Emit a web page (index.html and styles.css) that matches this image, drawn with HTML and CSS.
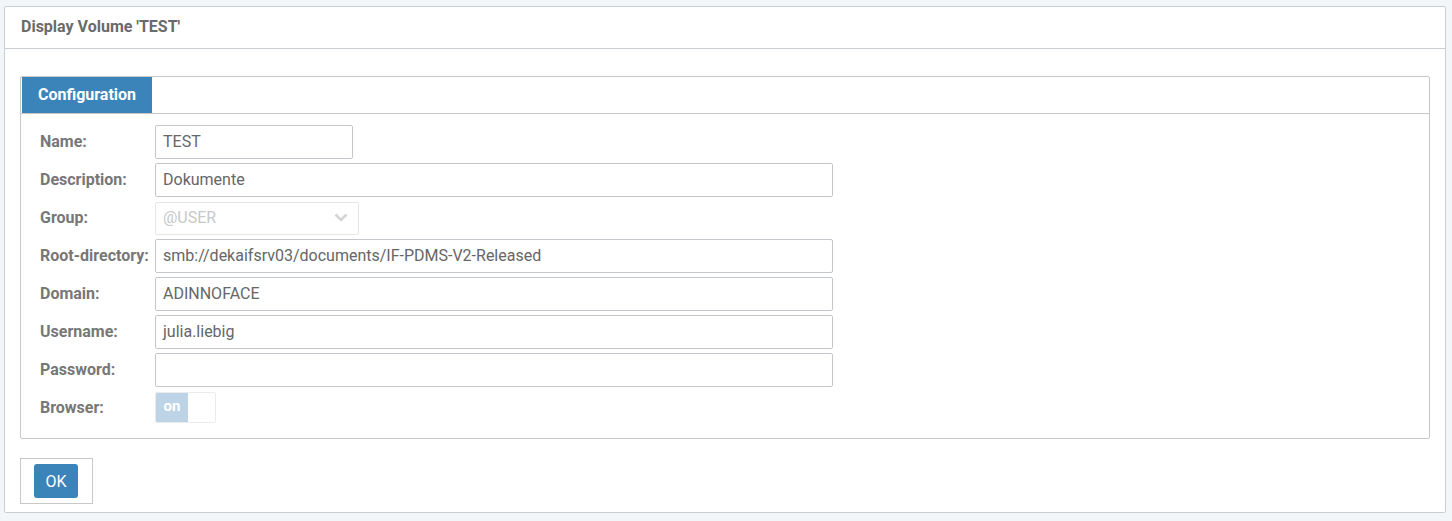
FILE: index.html
```html
<!DOCTYPE html>
<html>
<head>
<meta charset="utf-8">
<link rel="stylesheet" href="styles.css">
</head>
<body>
<div class="panel">
  <div class="panel-header">Display Volume 'TEST'</div>
  <div class="panel-body">
    <div class="tabbox">
      <div class="tabbar"><div class="tab">Configuration</div></div>
      <div class="form">
        <div class="row"><label>Name:</label><div class="input w-name">TEST</div></div>
        <div class="row"><label>Description:</label><div class="input w-wide">Dokumente</div></div>
        <div class="row"><label>Group:</label><div class="select">@USER<svg class="chev" width="14" height="9" viewBox="0 0 14 9"><path d="M1.5 1.5 L7 7 L12.5 1.5" fill="none" stroke="#d4d4d4" stroke-width="2.6"/></svg></div></div>
        <div class="row"><label>Root-directory:</label><div class="input w-wide">smb://dekaifsrv03/documents/IF-PDMS-V2-Released</div></div>
        <div class="row"><label>Domain:</label><div class="input w-wide">ADINNOFACE</div></div>
        <div class="row"><label>Username:</label><div class="input w-wide">julia.liebig</div></div>
        <div class="row"><label>Password:</label><div class="input w-wide"></div></div>
        <div class="row row-toggle"><label>Browser:</label><div class="toggle"><span class="on">on</span><span class="off"></span></div></div>
      </div>
    </div>
    <div class="actions"><button class="btn">OK</button></div>
  </div>
</div>
</body>
</html>
```
FILE: styles.css
```css
* { box-sizing: border-box; }
html, body { margin: 0; padding: 0; }
body {
  background: #f2f6f9;
  font-family: Roboto, "Liberation Sans", Arial, sans-serif;
  font-size: 16px;
  color: #666;
  padding: 6px 6px 0 4px;
}
.panel {
  background: #fff;
  border: 1px solid #c9ced3;
  border-radius: 2px;
  height: 507px;
}
.panel-header {
  height: 42px;
  border-bottom: 1px solid #c9ced3;
  padding-left: 16px;
  padding-bottom: 2px;
  display: flex;
  align-items: center;
  font-weight: bold;
  color: #6a6a6a;
  font-size: 16px;
}
.panel-body {
  padding: 27px 15px 8px 15px;
}
.tabbox {
  border: 1px solid #c8c8c8;
  border-radius: 2px;
}
.tabbar {
  border-bottom: 1px solid #c8c8c8;
  padding-left: 1px;
  height: 37px;
}
.tab {
  width: 130px;
  height: 36px;
  background: #3a84b9;
  color: #fff;
  font-weight: bold;
  display: flex;
  align-items: center;
  justify-content: center;
  padding-bottom: 1px;
  font-size: 16px;
}
.form {
  padding: 11px 0 13px 19px;
}
.row {
  display: flex;
  align-items: center;
  height: 34px;
  margin-bottom: 4px;
}
.row-toggle { height: 34px; margin-bottom: 0; }
.row label {
  width: 115px;
  font-weight: bold;
  color: #777;
  font-size: 16px;
  padding-bottom: 1px;
}
.input {
  height: 34px;
  border: 1px solid #c3c7cb;
  border-radius: 2px;
  padding-left: 7px;
  padding-bottom: 1px;
  display: flex;
  align-items: center;
  color: #666;
  font-size: 16px;
}
.w-name { width: 198px; }
.w-wide { width: 678px; }
.select {
  width: 204px;
  height: 33px;
  border: 1px solid #e6e6e6;
  border-radius: 2px;
  padding: 0 10px 1px 7px;
  display: flex;
  align-items: center;
  justify-content: space-between;
  color: #c8c8c8;
  font-size: 16px;
}
.toggle {
  display: flex;
  width: 61px;
  height: 31px;
  margin-top: -1px;
  border: 1px solid #ebebeb;
  border-radius: 2px;
  overflow: hidden;
}
.toggle .on {
  width: 32px;
  background: #bcd4e6;
  color: #fff;
  font-weight: bold;
  font-size: 15px;
  display: flex;
  align-items: center;
  justify-content: center;
  padding-bottom: 3px;
}
.toggle .off { flex: 1; background: #fff; }
.actions {
  margin-top: 19px;
  width: 73px;
  height: 46px;
  border: 1px solid #c8c8c8;
  display: flex;
  align-items: center;
  padding-left: 13px;
}
.btn {
  width: 44px;
  height: 34px;
  background: #3a84b9;
  border: none;
  border-radius: 3px;
  color: #fff;
  font-family: Roboto, "Liberation Sans", Arial, sans-serif;
  font-size: 16px;
  padding: 0;
}
```
